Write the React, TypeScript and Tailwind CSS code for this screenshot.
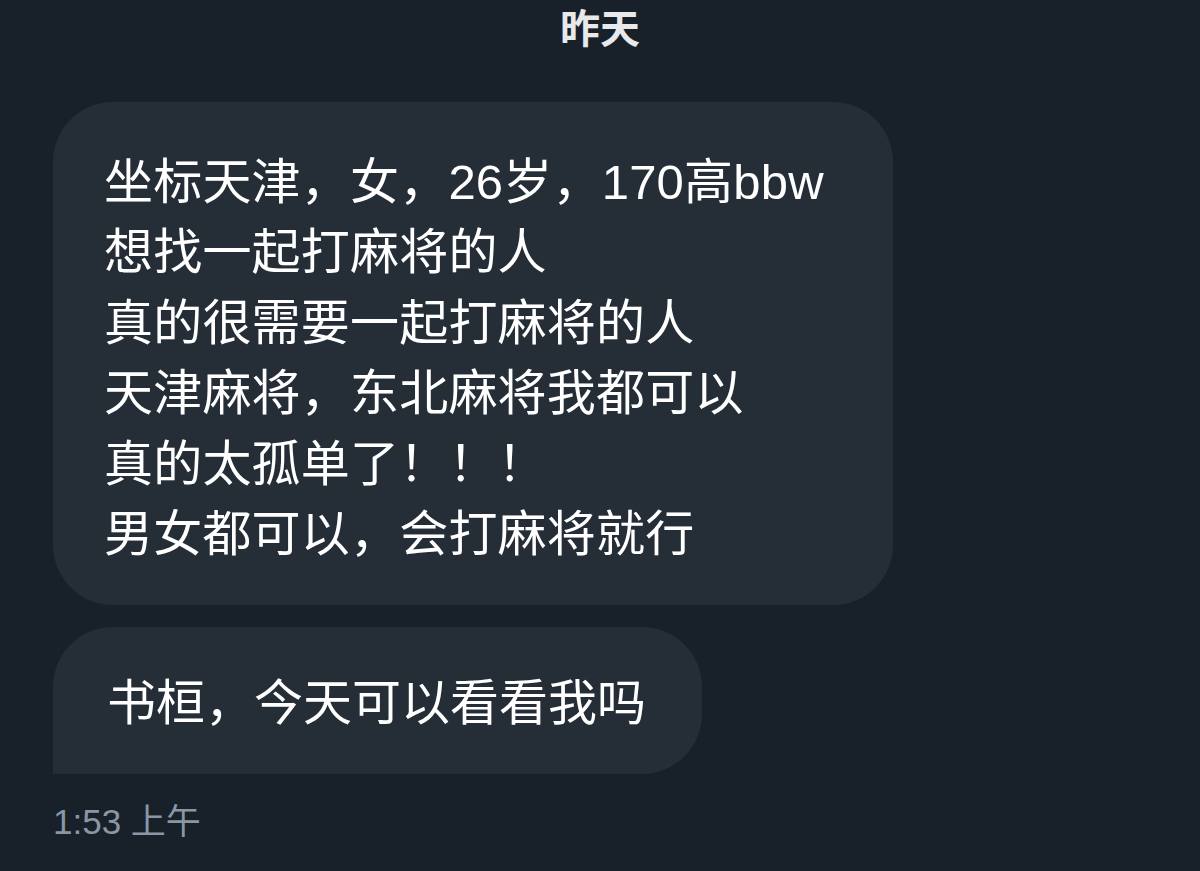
export default function App() {
  const lines = [
    "坐标天津，女，26岁，170高bbw",
    "想找一起打麻将的人",
    "真的很需要一起打麻将的人",
    "天津麻将，东北麻将我都可以",
    "真的太孤单了！！！",
    "男女都可以，会打麻将就行",
  ];
  const font = { fontFamily: '"Liberation Sans", "Noto Sans CJK SC", sans-serif' };
  return (
    <div className="w-[1200px] h-[871px] bg-[#18202a] overflow-hidden" style={font}>
      <div className="h-[58px] flex items-center justify-center text-[40px] font-bold text-[#e7e9ea] leading-none">
        昨天
      </div>
      <div className="pl-[53px] pt-[44px] flex flex-col items-start gap-[22px]">
        <div className="w-[840px] h-[503px] bg-[#252d36] rounded-[60px] pl-[51px] pr-[30px] pt-[45px] text-white text-[49px] leading-[70.4px] tracking-[0.2px]">
          {lines.map((l) => (
            <div key={l}>{l}</div>
          ))}
        </div>
        <div className="w-[649px] h-[147px] bg-[#252d36] rounded-[60px] rounded-bl-none pl-[54px] pt-[5px] flex items-center text-white text-[49px] leading-[70px]">
          书桓，今天可以看看我吗
        </div>
      </div>
      <div className="pl-[53px] mt-[26px] text-[35px] leading-[44px] text-[#8a96a3]">1:53 上午</div>
    </div>
  );
}
